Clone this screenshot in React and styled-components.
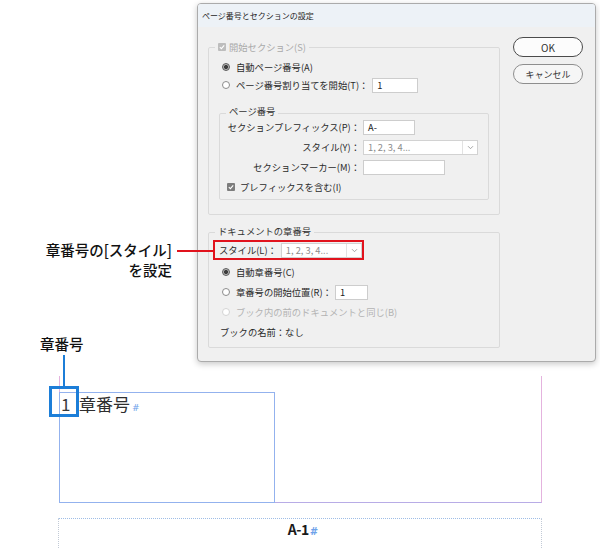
import React from "react"
import styled, { createGlobalStyle } from "styled-components"

const GlobalStyle = createGlobalStyle`
  html, body {
    margin: 0;
    padding: 0;
    background: #fff;
  }
  body {
    font-family: "Noto Sans CJK JP", "Noto Sans", sans-serif;
    color: #222;
  }
`

const Canvas = styled.div`
  position: relative;
  width: 600px;
  height: 548px;
  overflow: hidden;
  background: #fff;
`

/* ---------- dialog ---------- */

const Dialog = styled.section`
  position: absolute;
  left: 197px;
  top: 3px;
  z-index: 2;
  width: 399px;
  height: 359px;
  box-sizing: border-box;
  display: flex;
  flex-direction: column;
  background: #f0f0f0;
  border: 1px solid #ababab;
  border-radius: 4px;
  box-shadow: 0 2px 6px rgba(0, 0, 0, 0.22);
  overflow: hidden;
  font-size: 9.3px;
`

const TitleBar = styled.header`
  height: 23px;
  display: flex;
  align-items: center;
  padding-left: 4px;
  background: #edf2f7;
  font-size: 8px;
  color: #1e1e1e;
`

const Body = styled.div`
  display: flex;
  align-items: flex-start;
  padding: 10px 0 0 10px;
`

const Groups = styled.div`
  width: 292px;
  padding-top: 10px;
  display: flex;
  flex-direction: column;
`

const Group = styled.div`
  box-sizing: border-box;
  display: flex;
  flex-direction: column;
  border: 1px solid #dadada;
  border-radius: 2px;
  margin: ${p => p.$sub ? "19px 10px 9px" : "0"};
  margin-top: ${p => p.$gap || (p.$sub ? "19px" : "0")};
  padding-bottom: ${p => p.$sub ? "4px" : "5px"};
`

const Legend = styled.div`
  align-self: flex-start;
  display: flex;
  align-items: center;
  gap: 3px;
  height: 12px;
  line-height: 12px;
  margin: ${p => p.$lift || "-7px"} 0 0 6px;
  padding: 0 3px;
  background: #f0f0f0;
  color: ${p => p.$muted ? "#a9a9a9" : "#333"};
`

const Row = styled.div`
  display: flex;
  align-items: center;
  gap: 6px;
  height: ${p => p.$h || "18px"};
  padding-left: ${p => p.$indent || "13px"};
  margin-top: ${p => p.$top || "0"};
  color: ${p => p.$muted ? "#b3b3b3" : "#2a2a2a"};
  white-space: nowrap;
`

const FieldRows = styled.div`
  display: flex;
  flex-direction: column;
  gap: 4px;
  margin-top: 2px;
`

const FieldRow = styled.div`
  display: grid;
  grid-template-columns: 140px auto;
  column-gap: 3px;
  align-items: center;
  height: 16px;
  color: #2a2a2a;
`

const FieldLabel = styled.span`
  text-align: right;
  white-space: nowrap;
`

const Field = styled.span`
  box-sizing: border-box;
  display: inline-flex;
  align-items: center;
  width: ${p => p.$w}px;
  height: 15px;
  padding-left: 4px;
  margin-left: ${p => p.$ml || 0}px;
  background: #fff;
  border: 1px solid #cdcdcd;
  color: #222;
`

const Select = styled.span`
  box-sizing: border-box;
  display: inline-flex;
  align-items: stretch;
  width: ${p => p.$w}px;
  height: 15px;
  background: #fff;
  border: 1px solid #d2d2d2;
  color: #8c8c8c;
`

const SelectText = styled.span`
  flex: 1;
  display: flex;
  align-items: center;
  padding-left: 4px;
`

const SelectArrow = styled.span`
  width: 14px;
  display: flex;
  align-items: center;
  justify-content: center;
  border-left: 1px solid #e2e2e2;
`

const Radio = styled.span`
  flex: none;
  box-sizing: border-box;
  width: 8px;
  height: 8px;
  border-radius: 50%;
  border: 1px solid ${p => p.$disabled ? "#d4d4d4" : p.$checked ? "#5a5a5a" : "#8c8c8c"};
  background: ${p => p.$checked
    ? "radial-gradient(circle, #3c3c3c 0 1.8px, #b8b8b8 2.3px)"
    : "#fff"};
`

const Box = styled.span`
  flex: none;
  width: 8px;
  height: 8px;
  border-radius: 1px;
  display: flex;
  align-items: center;
  justify-content: center;
  background: ${p => p.$muted ? "#bdbdbd" : "#7d7d7d"};
`

const Highlight = styled.div`
  box-sizing: border-box;
  display: flex;
  align-items: center;
  gap: 4px;
  width: 151px;
  height: 20px;
  margin: 3px 0 0 4px;
  padding-left: 4px;
  border: 2px solid #e1131d;
  color: #2a2a2a;
  white-space: nowrap;
`

const Buttons = styled.div`
  display: flex;
  flex-direction: column;
  gap: 7px;
  margin-left: 13px;
`

const Button = styled.div`
  box-sizing: border-box;
  width: 70px;
  height: 20px;
  display: flex;
  align-items: center;
  justify-content: center;
  border-radius: 10px;
  border: ${p => p.$primary ? "1.5px solid #4b4b4b" : "1px solid #8e8e8e"};
  background: ${p => p.$primary ? "#fcfcfc" : "#f6f6f6"};
  color: #333;
  font-size: ${p => p.$primary ? "10px" : "9px"};
`

/* ---------- annotations ---------- */

const Callout = styled.div`
  position: absolute;
  left: ${p => p.$left}px;
  top: ${p => p.$top}px;
  width: ${p => p.$w}px;
  text-align: ${p => p.$align || "left"};
  font-size: 14.5px;
  font-weight: 500;
  line-height: 20px;
  color: #111;
  white-space: nowrap;
`

const Leader = styled.span`
  position: absolute;
  z-index: 3;
  left: ${p => p.$left}px;
  top: ${p => p.$top}px;
  width: ${p => p.$w}px;
  height: ${p => p.$h}px;
  background: ${p => p.$color};
`

const Marker = styled.span`
  position: absolute;
  z-index: 3;
  left: 49px;
  top: 386px;
  width: 30px;
  height: 31px;
  box-sizing: border-box;
  border: 3px solid #1c7ed8;
`

/* ---------- page ---------- */

const MarginGuide = styled.div`
  position: absolute;
  left: 59px;
  top: 376px;
  width: 483px;
  height: 127px;
  box-sizing: border-box;
  border: 1px solid #e4b3de;
  border-top: none;
  border-bottom-color: #b8ace6;
`

const TextFrame = styled.div`
  position: absolute;
  left: 59px;
  top: 392px;
  width: 216px;
  height: 111px;
  box-sizing: border-box;
  border: 1px solid #93b2ee;
`

const HeadingLine = styled.div`
  display: flex;
  align-items: baseline;
  height: 22px;
  line-height: 22px;
  font-size: 17px;
  color: #2e2e2e;
`

const ChapterNum = styled.span`
  width: 18px;
  padding-left: 1px;
  color: #3a3a3a;
`

const Pilcrow = styled.span`
  margin-left: ${p => p.$gap || 2}px;
  font-family: "DejaVu Sans", sans-serif;
  font-size: ${p => p.$size || 9}px;
  font-style: italic;
  color: #6ea2ea;
`

const Footer = styled.div`
  position: absolute;
  left: 58px;
  top: 518px;
  width: 484px;
  height: 40px;
  box-sizing: border-box;
  padding-top: 1px;
  padding-left: 4px;
  border: 1px dotted #c2cad6;
  border-top-color: #9fbde6;
  text-align: center;
  font-size: 14px;
  font-weight: 700;
  line-height: 18px;
  letter-spacing: -0.5px;
  color: #1a1a1a;
`

const Check = ({ muted }) => (
  <Box $muted={muted}>
    <svg width="6" height="6" viewBox="0 0 6 6">
      <path d="M0.8 3.1 L2.4 4.6 L5.2 1.4" fill="none" stroke="#fff" strokeWidth="1.1" />
    </svg>
  </Box>
)

const Chevron = () => (
  <svg width="7" height="5" viewBox="0 0 7 5">
    <path d="M1 1.2 L3.5 3.7 L6 1.2" fill="none" stroke="#9a9a9a" strokeWidth="0.9" />
  </svg>
)

const App = () => {
  return (
    <Canvas>
      <GlobalStyle />

      <MarginGuide />
      <TextFrame>
        <HeadingLine>
          <ChapterNum>1</ChapterNum>
          章番号<Pilcrow>#</Pilcrow>
        </HeadingLine>
      </TextFrame>
      <Footer>
        A-1<Pilcrow $size={10} $gap={1}>#</Pilcrow>
      </Footer>

      <Dialog>
        <TitleBar>ページ番号とセクションの設定</TitleBar>
        <Body>
          <Groups>
            <Group>
              <Legend $muted>
                <Check muted />
                開始セクション(S)
              </Legend>
              <Row $top="5px">
                <Radio $checked />
                自動ページ番号(A)
              </Row>
              <Row>
                <Radio />
                ページ番号割り当てを開始(T)：
                <Field $w={46} $ml={-2}>1</Field>
              </Row>

              <Group $sub>
                <Legend $lift="-9px">ページ番号</Legend>
                <FieldRows>
                  <FieldRow>
                    <FieldLabel>セクションプレフィックス(P)：</FieldLabel>
                    <Field $w={52}>A-</Field>
                  </FieldRow>
                  <FieldRow>
                    <FieldLabel>スタイル(Y)：</FieldLabel>
                    <Select $w={115}>
                      <SelectText>1, 2, 3, 4...</SelectText>
                      <SelectArrow><Chevron /></SelectArrow>
                    </Select>
                  </FieldRow>
                  <FieldRow>
                    <FieldLabel>セクションマーカー(M)：</FieldLabel>
                    <Field $w={82} />
                  </FieldRow>
                  <Row $h="16px" $indent="7px" style={{ gap: "5px" }}>
                    <Check />
                    プレフィックスを含む(I)
                  </Row>
                </FieldRows>
              </Group>
            </Group>

            <Group $gap="17px">
              <Legend $lift="-8px">ドキュメントの章番号</Legend>
              <Highlight>
                スタイル(L)：
                <Select $w={82}>
                  <SelectText>1, 2, 3, 4...</SelectText>
                  <SelectArrow><Chevron /></SelectArrow>
                </Select>
              </Highlight>
              <Row $h="20px" $top="2px">
                <Radio $checked />
                自動章番号(C)
              </Row>
              <Row $h="20px">
                <Radio />
                章番号の開始位置(R)：
                <Field $w={33} $ml={-3}>1</Field>
              </Row>
              <Row $h="20px" $muted>
                <Radio $disabled />
                ブック内の前のドキュメントと同じ(B)
              </Row>
              <Row $h="20px" $indent="11px">
                ブックの名前：なし
              </Row>
            </Group>
          </Groups>

          <Buttons>
            <Button $primary>OK</Button>
            <Button>キャンセル</Button>
          </Buttons>
        </Body>
      </Dialog>

      <Callout $left={20} $top={240} $w={152} $align="right">
        章番号の[スタイル]
        <br />
        を設定
      </Callout>
      <Leader $left={177} $top={250} $w={38} $h={2} $color="#e1131d" />

      <Callout $left={40} $top={334} $w={60}>章番号</Callout>
      <Leader $left={63} $top={355} $w={2} $h={31} $color="#1c7ed8" />
      <Marker />
    </Canvas>
  )
}

export default App
